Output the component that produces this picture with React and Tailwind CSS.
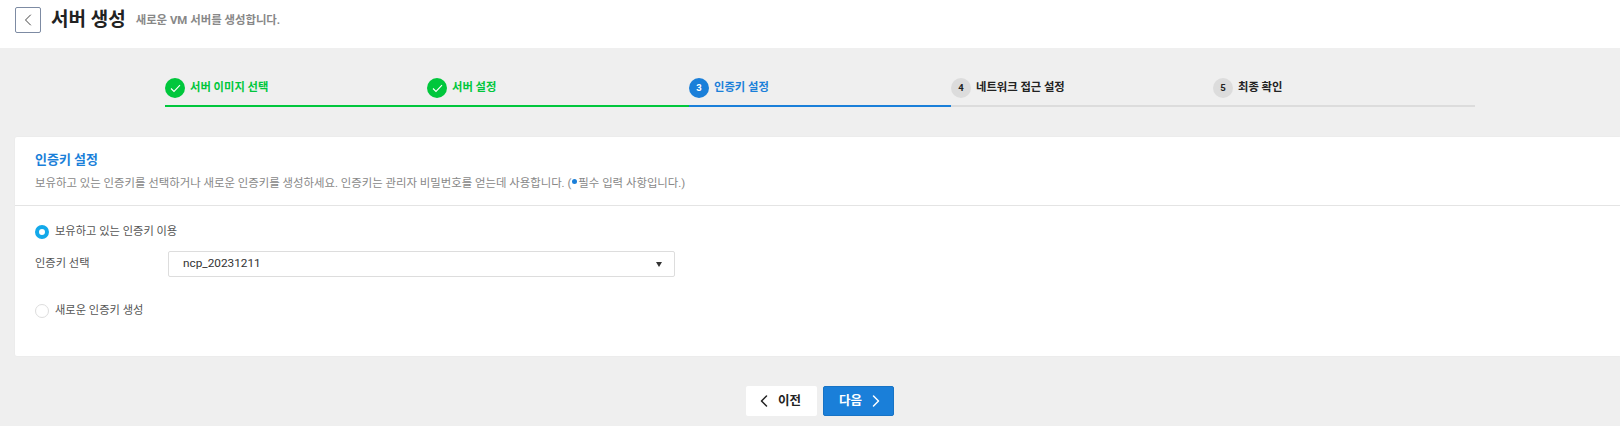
import React from "react";
import { ChevronLeft, ChevronRight } from "lucide-react";

const steps = [
  { no: 1, label: "서버 이미지 선택", state: "done" },
  { no: 2, label: "서버 설정", state: "done" },
  { no: 3, label: "인증키 설정", state: "active" },
  { no: 4, label: "네트워크 접근 설정", state: "todo" },
  { no: 5, label: "최종 확인", state: "todo" },
];

function Step({ no, label, state }) {
  return (
    <div
      className={`w-[262px] h-[29px] flex items-start border-b-[2px] ${
        state === "done"
          ? "border-[#00c73c]"
          : state === "active"
          ? "border-[#1a7fd9]"
          : "border-[#dcdcdc]"
      }`}
    >
      <div
        className={`w-[20px] h-[20px] rounded-full flex items-center justify-center text-[9.5px] font-bold ${
          state === "done"
            ? "bg-[#00c73c] text-white"
            : state === "active"
            ? "bg-[#1a7fd9] text-white"
            : "bg-[#dcdcdc] text-[#222222]"
        }`}
      >
        {state === "done" ? (
          <svg width="11" height="9" viewBox="0 0 11 9" fill="none">
            <path d="M1 4.5l3 3L10 1.2" stroke="white" strokeWidth="1.1" />
          </svg>
        ) : (
          no
        )}
      </div>
      <span
        className={`ml-[5px] text-[11.3px] leading-[20px] font-bold ${
          state === "done"
            ? "text-[#00c73c]"
            : state === "active"
            ? "text-[#1a7fd9]"
            : "text-[#222222]"
        }`}
      >
        {label}
      </span>
    </div>
  );
}

export default function App() {
  return (
    <div className="w-[1620px] h-[426px] overflow-hidden bg-[#efefef] font-['Roboto','Noto_Sans_CJK_KR',sans-serif]">
      {/* Header */}
      <div className="h-[48px] bg-white pl-[15px] flex items-start pt-[7px]">
        <button className="w-[26px] h-[26px] border border-[#7d8ba3] rounded-[2px] flex items-center justify-center text-[#444444]">
          <ChevronLeft size={20} strokeWidth={1.2} />
        </button>
        <h1 className="ml-[10px] text-[19px] leading-[26px] font-bold text-[#222222]">서버 생성</h1>
        <span className="ml-[10px] text-[11.4px] leading-[26px] font-bold text-[#888888]">
          새로운 VM 서버를 생성합니다.
        </span>
      </div>

      {/* Stepper */}
      <div className="pl-[165px] pt-[30px] flex">
        {steps.map((s) => (
          <Step key={s.no} {...s} />
        ))}
      </div>

      {/* Card */}
      <div className="mt-[30px] ml-[15px] h-[219px] bg-white rounded-l-[2px] shadow-[0_0_2px_rgba(0,0,0,0.05)]">
        <div className="h-[69px] px-[20px] pt-[14px] border-b border-[#e4e4e4]">
          <h2 className="text-[13px] leading-[18px] font-bold text-[#1a7fd9]">인증키 설정</h2>
          <p className="mt-[5px] text-[11.4px] leading-[18px] text-[#888888] flex items-center">
            보유하고 있는 인증키를 선택하거나 새로운 인증키를 생성하세요. 인증키는 관리자 비밀번호를 얻는데 사용합니다. (
            <span className="inline-block w-[5px] h-[5px] rounded-full bg-[#1a7fd9] mx-[1px] mb-[4px]" />
            필수 입력 사항입니다.)
          </p>
        </div>
        <div className="px-[20px] pt-[17px]">
          <label className="flex items-center h-[18px] text-[11.25px] text-[#555555]">
            <span className="w-[14px] h-[14px] rounded-full border-[4px] border-[#13a9ea] bg-white" />
            <span className="ml-[6px]">보유하고 있는 인증키 이용</span>
          </label>
          <div className="mt-[10px] flex items-center">
            <span className="w-[133px] text-[11.25px] text-[#555555]">인증키 선택</span>
            <div className="w-[507px] h-[26px] border border-[#dddddd] rounded-[2px] bg-white flex items-center justify-between pl-[14px] pr-[12px]">
              <span className="text-[11.8px] text-[#333333]">ncp_20231211</span>
              <span className="w-0 h-0 border-x-[3px] border-x-transparent border-t-[5px] border-t-[#333333]" />
            </div>
          </div>
          <label className="mt-[25px] flex items-center h-[18px] text-[11.25px] text-[#555555]">
            <span className="w-[14px] h-[14px] rounded-full border border-[#dddddd] bg-white" />
            <span className="ml-[6px]">새로운 인증키 생성</span>
          </label>
        </div>
      </div>

      {/* Footer buttons */}
      <div className="mt-[30px] pl-[746px] flex gap-[6px]">
        <button className="w-[71px] h-[30px] bg-white rounded-[2px] flex items-center pl-[8px] gap-[4px] text-[12.5px] font-bold text-[#222222]">
          <ChevronLeft size={20} strokeWidth={1.8} />
          이전
        </button>
        <button className="w-[71px] h-[30px] bg-[#1a7fd9] border border-[#1773c5] rounded-[2px] flex items-center pl-[15px] gap-[4px] text-[12.5px] font-bold text-white">
          다음
          <ChevronRight size={20} strokeWidth={1.8} />
        </button>
      </div>
    </div>
  );
}
